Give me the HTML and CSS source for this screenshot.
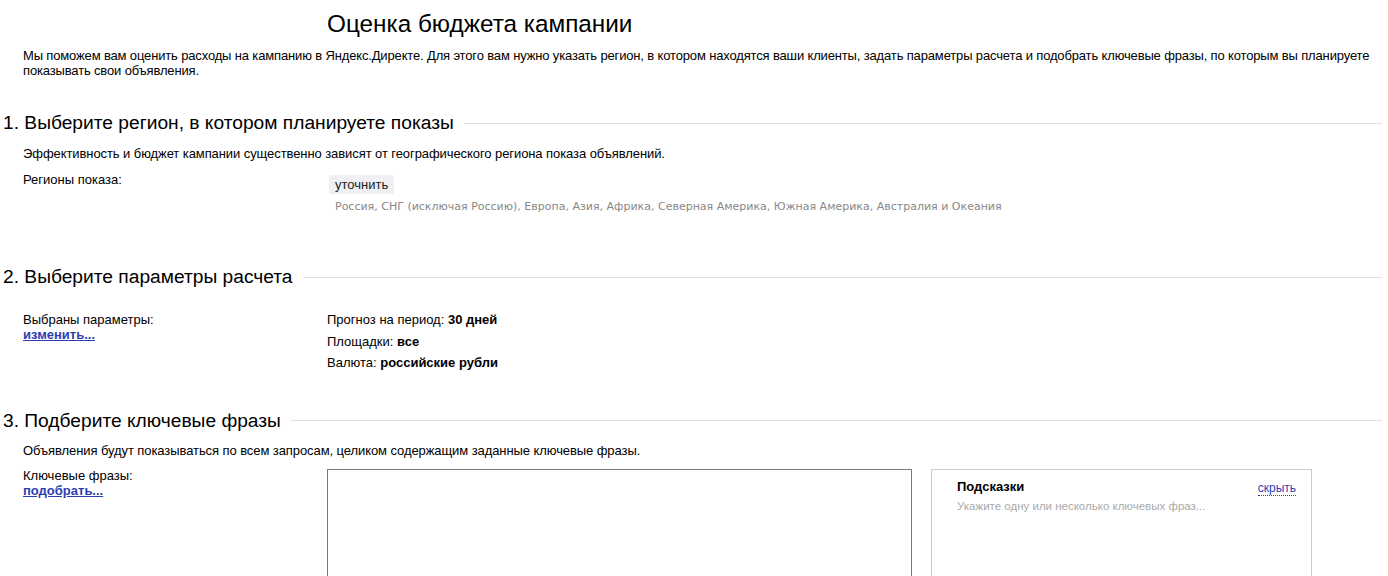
FILE: index.html
```html
<!DOCTYPE html>
<html lang="ru">
<head>
<meta charset="UTF-8">
<title>Оценка бюджета кампании</title>
<link rel="stylesheet" href="styles.css">
</head>
<body>

<div class="page">
    <h1 class="title">Оценка бюджета кампании</h1>
    <p class="intro">Мы поможем вам оценить расходы на кампанию в Яндекс.Директе. Для этого вам нужно указать регион, в котором находятся ваши клиенты, задать параметры расчета и подобрать ключевые фразы, по которым вы планируете показывать свои объявления.</p>

    <!-- шаг 1 -->
    <div class="step step-region">
        <h2 class="step-title"><span>1. Выберите регион, в котором планируете показы</span></h2>
        <div class="step-body">
            <p class="note">Эффективность и бюджет кампании существенно зависят от географического региона показа объявлений.</p>
            <div class="row">
                <div class="label">Регионы показа:</div>
                <div class="value">
                    <button class="btn-refine" type="button">уточнить</button>
                    <div class="regions">Россия, СНГ (исключая Россию), Европа, Азия, Африка, Северная Америка, Южная Америка, Австралия и Океания</div>
                </div>
            </div>
        </div>
    </div>

    <!-- шаг 2 -->
    <div class="step step-params">
        <h2 class="step-title"><span>2. Выберите параметры расчета</span></h2>
        <div class="step-body">
            <div class="row">
                <div class="label">
                    Выбраны параметры:<br>
                    <a href="#" class="link-bold">изменить...</a>
                </div>
                <div class="value params">
                    <div>Прогноз на период: <b>30 дней</b></div>
                    <div>Площадки: <b>все</b></div>
                    <div>Валюта: <b>российские рубли</b></div>
                </div>
            </div>
        </div>
    </div>

    <!-- шаг 3 -->
    <div class="step step-phrases">
        <h2 class="step-title"><span>3. Подберите ключевые фразы</span></h2>
        <div class="step-body">
            <p class="note">Объявления будут показываться по всем запросам, целиком содержащим заданные ключевые фразы.</p>
            <div class="row">
                <div class="label">
                    Ключевые фразы:<br>
                    <a href="#" class="link-bold">подобрать...</a>
                </div>
                <div class="value phrases">
                    <textarea class="phrases-input"></textarea>
                    <div class="hints">
                        <div class="hints-head">
                            <b>Подсказки</b>
                            <a href="#" class="link-dotted">скрыть</a>
                        </div>
                        <div class="hints-empty">Укажите одну или несколько ключевых фраз...</div>
                    </div>
                </div>
            </div>
        </div>
    </div>
</div>

</body>
</html>
```

FILE: styles.css
```css
body {
    margin: 0;
    font-family: "Liberation Sans", Arial, sans-serif;
    font-size: 13px;
    color: #000;
    background: #fff;
    height: 576px;
    overflow: hidden;
}

.page {
    padding: 0 6px 0 3px;
}

.title {
    margin: 9px 0 0 324px;
    font-size: 24.3px;
    font-weight: normal;
    line-height: 30px;
}

.intro {
    margin: 10px 0 0 20px;
    line-height: 14.5px;
    letter-spacing: -0.15px;
}

.step-title {
    display: flex;
    align-items: center;
    margin: 0;
    font-size: 19.2px;
    font-weight: normal;
    line-height: 24px;
}

.step-title::after {
    content: "";
    flex: 1;
    height: 1px;
    background-color: #e0e0e0;
    margin-left: 10px;
}

.step-region {
    margin-top: 33px;
}

.step-params {
    margin-top: 52px;
}

.step-phrases {
    margin-top: 35px;
}

.step-body {
    padding-left: 20px;
}

.note {
    margin: 11px 0 0 0;
    line-height: 16px;
    letter-spacing: -0.08px;
}

.row {
    display: flex;
    margin-top: 10px;
}

.label {
    width: 304px;
    flex: none;
    line-height: 15px;
}

.value {
    flex: 1;
}

.btn-refine {
    display: block;
    margin: 3px 0 0 2px;
    padding: 0 6px;
    height: 19px;
    border: none;
    border-radius: 2px;
    background-color: #eef0f3;
    font-family: "Liberation Sans", Arial, sans-serif;
    font-size: 13px;
    color: #222;
}

.regions {
    margin: 6px 0 0 8px;
    font-family: "DejaVu Sans", Verdana, sans-serif;
    font-size: 11px;
    color: #888;
}

.step-params .row {
    margin-top: 23px;
}

.params div {
    line-height: 21.5px;
    margin-top: -3px;
}

.params div + div {
    margin-top: 0;
}

.link-bold {
    color: #2c3fb1;
    font-weight: bold;
}

.step-phrases .note {
    margin-top: 10px;
}

.step-phrases .row {
    margin-top: 9px;
}

.phrases {
    display: flex;
    gap: 19px;
}

.phrases-input {
    width: 585px;
    height: 130px;
    margin: 1px 0 0 0;
    padding: 4px;
    border: 1px solid #7a7a7a;
    box-sizing: border-box;
    resize: none;
}

.hints {
    width: 381px;
    height: 130px;
    margin-top: 1px;
    padding: 9px 15px 0 25px;
    border: 1px solid #ccc;
    box-sizing: border-box;
}

.hints-head {
    display: flex;
    justify-content: space-between;
    line-height: 16px;
}

.link-dotted {
    color: #2c3fb1;
    font-size: 12px;
    text-decoration: none;
    border-bottom: 1px dotted #2c3fb1;
    line-height: 14px;
    margin-top: 2px;
}

.hints-empty {
    margin-top: 4px;
    font-size: 11.5px;
    color: #aaa;
}
```
